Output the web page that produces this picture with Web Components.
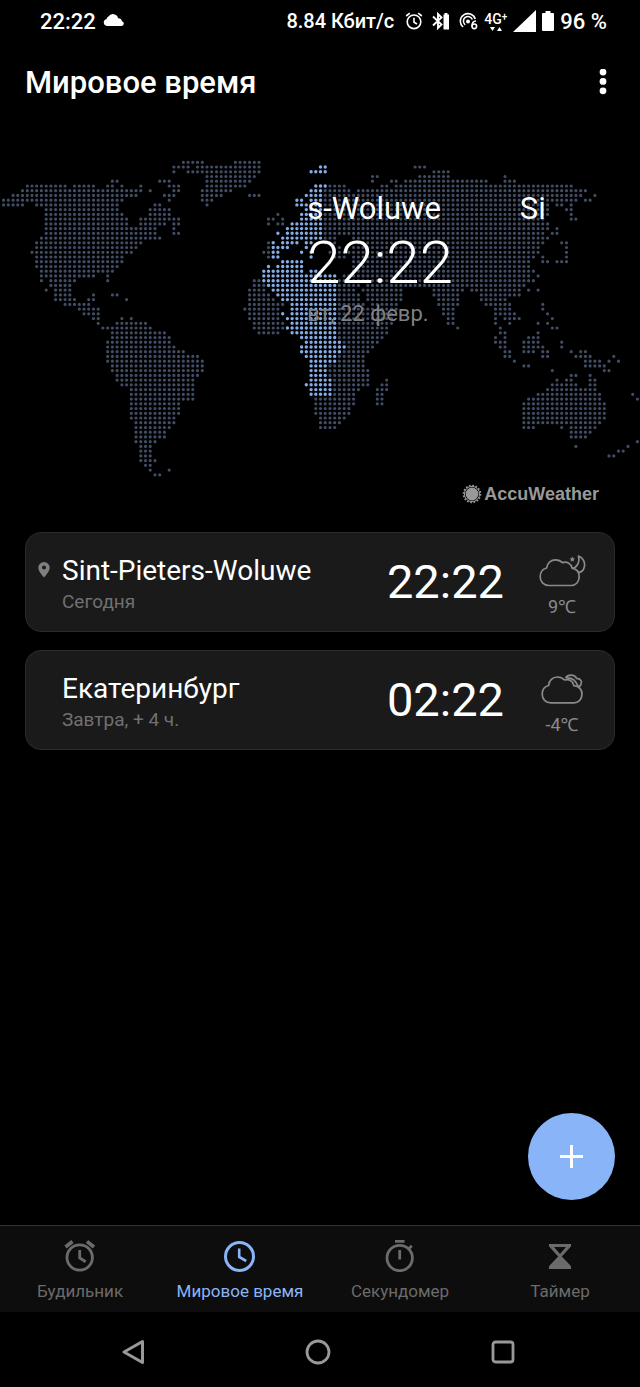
<!DOCTYPE html>
<html lang="ru">
<head>
<meta charset="utf-8">
<meta name="viewport" content="width=device-width, initial-scale=1">
<title>Мировое время</title>
<style>
  body {
    margin: 0;
    background: #000;
    color: #fff;
    font-family: Roboto, "Noto Sans", sans-serif;
  }
</style>
</head>
<body>
<clock-app></clock-app>

<script>
// [width, height, markup]
const ICONS = {
  cloud: [22, 14, '<path fill="currentColor" d="M4 12a3.6 3.6 0 0 1-.4-7.1A3 3 0 0 1 5.4 2.6a5.4 5.4 0 0 1 9.8 1.6A3.8 3.8 0 0 1 19 7.2a2.5 2.5 0 0 1 0 4.800z"/>'],
  alarmSmall: [18, 18, '<g fill="none" stroke="currentColor" stroke-width="1.6"><circle cx="9" cy="9.8" r="6.8"/><path d="M9 5.8v4.4l3 1.800M1.200 4l3.600-2.800M16.800 4l-3.600-2.800"/></g>'],
  bluetooth: [18, 18, '<path fill="none" stroke="currentColor" stroke-width="1.9" d="M1 4.5l8.5 8L6 16V2l3.5 3.500L1 13.500"/><path fill="currentColor" d="M12.5 1h3v1.500H17v15h-5.500v-15h1z"/>'],
  hotspot: [19, 18, '<g fill="none" stroke="currentColor" stroke-width="1.6"><path d="M4 15A7.600 7.600 0 1 1 16.200 7"/><path d="M6.200 12.800A4.600 4.600 0 1 1 13.300 7.500"/><path d="M17 9c-3 0-4 2.500-4 5.500"/><circle cx="15.300" cy="14.300" r="2.300"/></g><circle cx="9" cy="9.500" r="2" fill="currentColor"/>'],
  signal: [23, 22, '<path fill="currentColor" d="M23 0v22H0z"/>'],
  battery: [12, 20, '<path fill="currentColor" d="M3.5 0h5v2H11a1 1 0 0 1 1 1v16a1 1 0 0 1-1 1H1a1 1 0 0 1-1-1V3a1 1 0 0 1 1-1h2.500z"/>'],
  updown: [12, 4, '<path fill="currentColor" d="M0 0h5L2.5 4zM7 4h5L9.500 0z"/>'],
  more: [8, 26, '<g fill="currentColor"><circle cx="4" cy="3" r="3.4"/><circle cx="4" cy="12.400" r="3.400"/><circle cx="4" cy="21.800" r="3.400"/></g>'],
  sun: [20, 20, '<circle cx="10" cy="10" r="8.4" fill="none" stroke="currentColor" stroke-width="1.8" stroke-dasharray="1.7 1.6"/><circle cx="10" cy="10" r="7.600" fill="none" stroke="currentColor"/><circle cx="10" cy="10" r="6.400" fill="currentColor"/>'],
  pin: [12, 16, '<path fill="currentColor" fill-rule="evenodd" d="M6 0a5.7 5.7 0 0 1 5.700 5.700C11.700 9.500 6 15.500 6 15.500S.3 9.500.3 5.700A5.700 5.700 0 0 1 6 0zm0 3.600a2 2 0 1 0 0 4 2 2 0 0 0 0-4z"/>'],
  cloudMoon: [48, 34, '<g fill="none" stroke="currentColor" stroke-width="1.7" stroke-linejoin="round"><path d="M11 31.5C5.500 31.500 2.200 27.500 2.200 22.800C2.200 17.800 5 14.800 8.600 14C9 9 13 5.800 17.500 5.800C20.500 5.800 22.700 6.800 24.500 8.600C28.500 7.200 33 9 34.200 14.200C38.500 15 41.200 18 41.200 22.800C41.200 27.600 38 31.500 33 31.500Z"/><path d="M34 14.500C38.500 14 42.300 8.500 40.400 2C45 3.500 47.500 8.500 46.300 13C45.500 16.500 42.800 18.500 40 18.700"/></g><path fill="currentColor" d="M34.300 2.300l.8 1.900 2 .2-1.500 1.400.4 2-1.700-1-1.700 1 .4-2-1.500-1.400 2-.2z"/>'],
  clouds: [48, 34, '<g fill="none" stroke="currentColor" stroke-width="1.7" stroke-linejoin="round"><path d="M13 30.8C7.500 30.800 4.200 27 4.200 22.300C4.200 17.300 7 14.300 10.600 13.500C11 8.500 14.500 5 19.500 5C22.500 5 24.700 6.200 26.500 8C30.500 6.600 34.600 8.500 35.800 13.600C41 14.300 44 17.500 44 22.300C44 27 40.500 30.800 36 30.800Z"/><path d="M27.500 6C29.500 2.200 36.500 1.800 38.500 6.300C42.500 6.300 44.500 9.300 43 12.400C42.500 13.600 41.500 14.500 40.300 14.800M28 6C33.500 5.400 38 8.800 40.300 14.800"/></g>'],
  plus: [23, 23, '<path stroke="currentColor" stroke-width="3" d="M11.5 0v23M0 11.500h23"/>'],
  alarm: [32, 32, '<g fill="none" stroke="currentColor" stroke-width="2.8"><circle cx="15.700" cy="17.500" r="12.700"/><path d="M15.700 10v8l6 3.800"/><path stroke-width="3.600" d="M1.500 7l7-5.500M30 7l-7-5.500"/></g>'],
  world: [32, 32, '<g fill="none" stroke="currentColor" stroke-width="3"><circle cx="15.5" cy="16.500" r="14"/><path stroke-width="2.600" d="M15.200 8.500V17l7 4"/></g>'],
  stopwatch: [32, 32, '<g fill="none" stroke="currentColor" stroke-width="2.8"><circle cx="15.700" cy="18" r="12.700"/><path d="M11 1.400h9.500M15.700 10v9.500M24.300 9.300l3.500-3.500"/></g>'],
  timer: [32, 32, '<path fill="currentColor" fill-rule="evenodd" d="M5 4h22q.8 2-1 3.500L17.800 16.500l8.600 9q1.200 1.600.6 3.500H5q-.6-1.900.6-3.500l8.600-9L6 7.500Q4.200 6 5 4zm5 3l6 7 6-7z"/>'],
  back: [24, 26, '<path fill="none" stroke="currentColor" stroke-width="3" stroke-linejoin="round" d="M21.5 2.500v21L3 13z"/>'],
  home: [26, 26, '<circle cx="13" cy="13" r="11" fill="none" stroke="currentColor" stroke-width="2.8"/>'],
  recent: [24, 24, '<rect x="2" y="2" width="20" height="20" rx="2.5" fill="none" stroke="currentColor" stroke-width="2.8"/>']
}

// One entry per dot row: column ranges in the base colour | ranges in the lit time zone
const MAP_ROWS = [
  '38-42 49-54',
  '36-39 41-54 87-89|67-68',
  '36 39-54 91-94|65-68',
  '43-53 78-79 88-94 106',
  '23-24 33-35 43-52 78 82-83 85-102 106-108',
  '5-13 15-19 22-23 25 29 35-37 43-51 69-72 80-81 83-120|66-68',
  '4-29 31 36-37 42-48 68-73 75-123|65-67',
  '2-28 34-36 42-46 52-54 68-122 125|64-67',
  '0-25 35 42-44 68-121 123-124|62-63 65-67',
  '0-4 7-24 32-33 43 68-115 117-118 120|62-67',
  '9-24 31-35 68-115 119-120|64-67',
  '9-25 31-35 58 68-115 120|63-67',
  '9-26 29-37 56-57 59 68-114 120-121|63-67',
  '9-26 29-34 36-37 56 58-59 68-115|61-67',
  '9-32 36 68-115 117|60-67',
  '9-32 36-37 68-114 116-117|58 60-67',
  '8-33 68-70 74-115|59-67',
  '7-29 56 68-70 74-114 118-119|57 59-62 64-65',
  '7-28 56 71 74-113 119|57-60 64',
  '6-27 55-56 69-112 113 119|57-58 63 65',
  '7-25 56 70-72 74-112 114 119|57-58 65',
  '7-25 74-111 114-115 117-119|59-63',
  '7-24 74-111|56 58-63',
  '8-23 74-112|55-63 65-66',
  '8-19 22 72-111 113|55-70',
  '8 10-15 22 53-54 71-112|55-70',
  '10-14 53-55 71-75 77-110|56-70',
  '9 11-14 52-55 71-74 76-84 91-97 99-109 111 113|57-70',
  '11-14 19 23-24 52-56 71-75 77-84 91-96 101-109|58-70',
  '11-15 18-19 26 52-57 71-75 77-84 92-96 101-106|59-70',
  '13-18 52-59 71-76 78-83 92-96 102-107 114|61-70',
  '16-20 51-58 71-83 93-95 104-107 114|61-70',
  '17-20 52-58 71-82 93-95 104-108 115|59 61-70',
  '19-20 25 27 52-58 71-82 94-95 104 106-109 116|60-70',
  '20 24-30 53-59 71-82 94-95 104 107 113 115|61-70',
  '21-31 53-59 71-81 96 105 116-117|60-70',
  '23-34 54-58 71-81 105-106 113|61-70',
  '23-35 71-80 104 106 111-113|63-70',
  '22-35 72-79 104-106 110-113 118|64-71',
  '22-36 73-78 105-106 110-114 118|63-72',
  '22-38 72-77 106-107 110-112 114-115 120 122-123|63-71',
  '22-41 71-76 106-107 114-115 121-124 129|64-70',
  '22-42 71-76 108 123-126 128 130|65-70',
  '23-42 69-76 110-111 123-127|65-68',
  '23-42 69-77 116 127-128|65-68',
  '24-41 69-77 120-121 124|65-68',
  '24-40 70-77 81 117 119-120 124-125|65-69',
  '25-40 70-77 80-81 116-121 124-125|64-69',
  '27-40 70-75 79-81 115-125|65-69',
  '27-40 70-74 79-80 113-126 133|65-69',
  '27-40 66-74 79-80 111-126 134',
  '27-37 66-74 79-80 110-127',
  '27-37 66-73 110-127',
  '27-37 66-73 110-127',
  '27-36 67-72 110-127',
  '28-36 67-71 110-126',
  '28-35 67-70 110-112 118 120-125',
  '28-34 120-124',
  '28-34 120-123',
  '28-32 134',
  '29-31 121 132',
  '29-31 130-131',
  '29-31 128-129',
  '29-32',
  '30-31',
  '31 35',
  '32-33'
]

class BaseElement extends HTMLElement {
  constructor () {
    super()
    this.shadow = this.attachShadow({ mode: 'open' })
  }

  connectedCallback () {
    this.shadow.innerHTML = this.template()
  }
}

class AppIcon extends BaseElement {
  template () {
    const [width, height, markup] = ICONS[this.getAttribute('name')]
    return /* html */ `
      <style>
        :host { display: block; flex: none; }
        svg { display: block; }
      </style>
      <svg width="${width}" height="${height}" viewBox="0 0 ${width} ${height}" aria-hidden="true">${markup}</svg>
    `
  }
}

class StatusBar extends BaseElement {
  template () {
    return /* html */ `
      <style>
        :host {
          display: flex;
          align-items: center;
          justify-content: space-between;
          height: 42px;
          padding: 0 33px 0 40px;
          font-size: 22px;
          font-weight: 500;
        }
        div { display: flex; align-items: center; }
        .left { gap: 7px; }
        .right { gap: 6px; }
        .speed { font-size: 20px; margin-right: 5px; }
        .radios { gap: 9px; }
        .network { flex-direction: column; font-size: 14px; line-height: 14px; gap: 1px; }
        .network span { display: flex; }
        sup { font-size: 10px; line-height: 10px; }
      </style>
      <div class="left"><span>22:22</span><app-icon name="cloud"></app-icon></div>
      <div class="right">
        <span class="speed">8.84 Кбит/с</span>
        <div class="radios">
          <app-icon name="alarmSmall"></app-icon>
          <app-icon name="bluetooth"></app-icon>
          <app-icon name="hotspot"></app-icon>
        </div>
        <div class="network"><span>4G<sup>+</sup></span><app-icon name="updown"></app-icon></div>
        <app-icon name="signal"></app-icon>
        <app-icon name="battery"></app-icon>
        <span>96 %</span>
      </div>
    `
  }
}

class PageHeader extends BaseElement {
  template () {
    return /* html */ `
      <style>
        :host {
          display: flex;
          align-items: center;
          justify-content: space-between;
          height: 80px;
          padding: 0 25px;
        }
        h1 { margin: 0; font-size: 31px; font-weight: 500; }
        button {
          padding: 8px;
          border: none;
          background: none;
          color: inherit;
          cursor: pointer;
        }
      </style>
      <h1><slot></slot></h1>
      <button aria-label="Ещё"><app-icon name="more"></app-icon></button>
    `
  }
}

class WorldMap extends BaseElement {
  dots (layer) {
    let d = ''
    MAP_ROWS.forEach((row, j) => {
      const ranges = row.split('|')[layer]
      if (!ranges) return
      for (const range of ranges.split(' ')) {
        const [from, to = from] = range.split('-').map(Number)
        for (let i = from; i <= to; i++) {
          d += `M${(3.6 + i * 4.73).toFixed(1)} ${(7.3 + j * 4.735).toFixed(1)}h0`
        }
      }
    })
    return d
  }

  template () {
    return /* html */ `
      <style>
        :host { display: block; position: relative; padding-top: 33px; }
        .map {
          display: block;
          width: 100%;
          fill: none;
          stroke-linecap: round;
        }
        .land { stroke: #414d64; stroke-width: 3.2; }
        .zone { stroke: #86ace8; stroke-width: 3.4; }
        .now {
          position: absolute;
          top: 69px;
          left: 48%;
          width: 238px;
        }
        .place {
          display: flex;
          gap: 79px;
          overflow: hidden;
          white-space: nowrap;
          font-size: 31px;
          line-height: 36px;
        }
        .time { font-size: 60px; line-height: 72px; font-weight: 300; }
        .date { font-size: 22px; line-height: 30px; color: #808080; }
        .source {
          display: flex;
          align-items: center;
          justify-content: flex-end;
          gap: 2px;
          height: 28px;
          padding-right: 41px;
          color: #999;
          font: bold 18px "Liberation Sans", sans-serif;
        }
      </style>
      <svg class="map" viewBox="0 0 640 325" aria-hidden="true">
        <path class="land" d="${this.dots(0)}"/>
        <path class="zone" d="${this.dots(1)}"/>
      </svg>
      <div class="now">
        <div class="place"><span>s-Woluwe</span><span>Si</span></div>
        <div class="time">22:22</div>
        <div class="date">вт, 22 февр.</div>
      </div>
      <div class="source"><app-icon name="sun"></app-icon><span>AccuWeather</span></div>
    `
  }
}

class CityCard extends BaseElement {
  template () {
    return /* html */ `
      <style>
        :host {
          display: grid;
          grid-template-columns: 36px 1fr auto 104px;
          box-sizing: border-box;
          height: 100px;
          border: 1px solid #2b2b2b;
          border-radius: 16px;
          background: #1a1a1a;
        }
        .pin { padding: 29px 0 0 12px; color: #808080; }
        .city { padding-top: 20px; white-space: nowrap; }
        .name { font-size: 28px; line-height: 36px; }
        .day { font-size: 19px; line-height: 26px; color: #707070; }
        .time { padding: 20px 6px 0 0; font-size: 47px; line-height: 58px; }
        .weather {
          display: flex;
          flex-direction: column;
          align-items: center;
          padding-top: 21px;
          color: #8a8a8a;
          font-size: 18px;
          line-height: 22px;
          gap: 8px;
        }
      </style>
      <div class="pin">${this.hasAttribute('current') ? '<app-icon name="pin"></app-icon>' : ''}</div>
      <div class="city">
        <div class="name"><slot></slot></div>
        <div class="day">${this.getAttribute('day')}</div>
      </div>
      <div class="time">${this.getAttribute('time')}</div>
      <div class="weather">
        <app-icon name="${this.getAttribute('weather')}"></app-icon>
        <span>${this.getAttribute('temp')}</span>
      </div>
    `
  }
}

class AddButton extends BaseElement {
  template () {
    return /* html */ `
      <style>
        :host { display: block; }
        button {
          display: grid;
          place-items: center;
          width: 87px;
          height: 87px;
          padding: 0;
          border: none;
          border-radius: 50%;
          background: #8ab4f8;
          color: #fff;
          cursor: pointer;
        }
      </style>
      <button aria-label="Добавить город"><app-icon name="plus"></app-icon></button>
    `
  }
}

class TabLink extends BaseElement {
  template () {
    return /* html */ `
      <style>
        :host { display: block; color: #6b6b6b; }
        :host([active]) { color: #8ab4f8; }
        a {
          display: flex;
          flex-direction: column;
          align-items: center;
          gap: 8px;
          padding: 14px 0 10px;
          color: inherit;
          font-size: 17px;
          line-height: 22px;
          text-decoration: none;
        }
      </style>
      <a href="#${this.getAttribute('icon')}">
        <app-icon name="${this.getAttribute('icon')}"></app-icon>
        <span><slot></slot></span>
      </a>
    `
  }
}

class TabBar extends BaseElement {
  template () {
    return /* html */ `
      <style>
        :host { display: block; border-top: 1px solid #333; background: #0d0d0d; }
        nav { display: grid; grid-template-columns: repeat(4, 1fr); }
      </style>
      <nav><slot></slot></nav>
    `
  }
}

class SystemNav extends BaseElement {
  template () {
    return /* html */ `
      <style>
        :host {
          display: grid;
          grid-template-columns: repeat(3, 1fr);
          height: 75px;
          padding: 4px 44px 0 40px;
          box-sizing: border-box;
        }
        button {
          display: grid;
          place-items: center;
          padding: 0;
          border: none;
          background: none;
          color: #999;
        }
      </style>
      <button aria-label="Назад"><app-icon name="back"></app-icon></button>
      <button aria-label="Домой"><app-icon name="home"></app-icon></button>
      <button aria-label="Недавние"><app-icon name="recent"></app-icon></button>
    `
  }
}

class ClockApp extends BaseElement {
  template () {
    return /* html */ `
      <style>
        :host { display: flex; flex-direction: column; min-height: 100vh; }
        main { display: flex; flex-direction: column; flex: 1; }
        .cities {
          display: flex;
          flex-direction: column;
          gap: 18px;
          padding: 24px 25px;
        }
        add-button { align-self: flex-end; margin: auto 25px 25px 0; }
      </style>
      <status-bar></status-bar>
      <page-header>Мировое время</page-header>
      <main>
        <world-map></world-map>
        <div class="cities">
          <city-card current day="Сегодня" time="22:22" weather="cloudMoon" temp="9℃">Sint-Pieters-Woluwe</city-card>
          <city-card day="Завтра, + 4 ч." time="02:22" weather="clouds" temp="-4℃">Екатеринбург</city-card>
        </div>
        <add-button></add-button>
      </main>
      <tab-bar>
        <tab-link icon="alarm">Будильник</tab-link>
        <tab-link icon="world" active>Мировое время</tab-link>
        <tab-link icon="stopwatch">Секундомер</tab-link>
        <tab-link icon="timer">Таймер</tab-link>
      </tab-bar>
      <system-nav></system-nav>
    `
  }
}

customElements.define('app-icon', AppIcon)
customElements.define('status-bar', StatusBar)
customElements.define('page-header', PageHeader)
customElements.define('world-map', WorldMap)
customElements.define('city-card', CityCard)
customElements.define('add-button', AddButton)
customElements.define('tab-link', TabLink)
customElements.define('tab-bar', TabBar)
customElements.define('system-nav', SystemNav)
customElements.define('clock-app', ClockApp)
</script>
</body>
</html>
